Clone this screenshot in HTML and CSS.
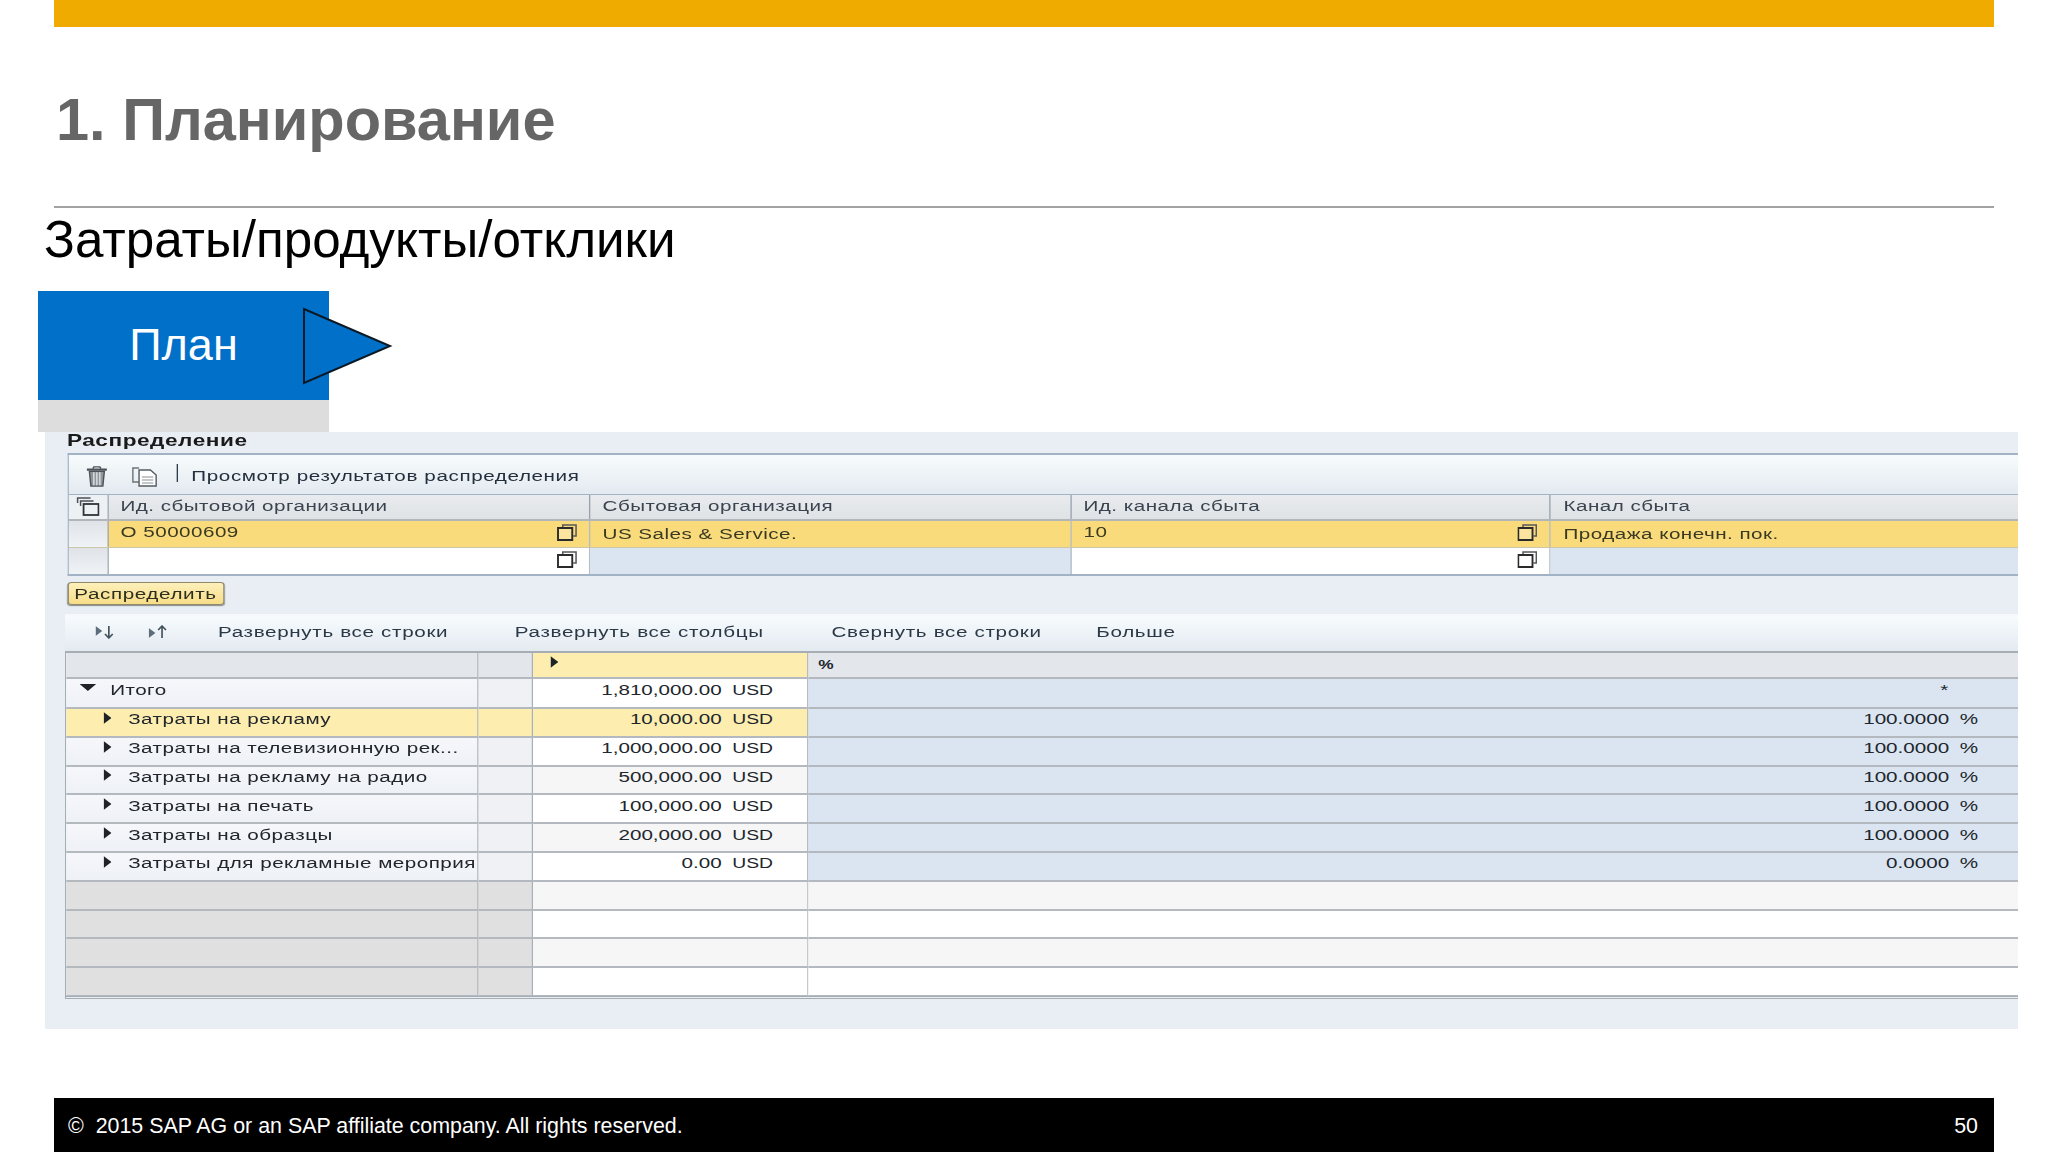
FILE: index.html
```html
<!DOCTYPE html>
<html lang="ru">
<head>
<meta charset="utf-8">
<title>1. Планирование</title>
<link rel="stylesheet" href="styles.css">
</head>
<body>
<svg class="defs" width="0" height="0" aria-hidden="true">
  <symbol id="vh" viewBox="0 0 21 17" preserveAspectRatio="none"><path d="M6 3.500V1h14v11h-3" fill="none" stroke="#55585c" stroke-width="1.600"/><rect x="1" y="4" width="15" height="12" fill="#fff" fill-opacity=".25" stroke="#2b2b2b" stroke-width="2"/></symbol>
  <symbol id="tr" viewBox="0 0 8 12" preserveAspectRatio="none"><path d="M0 0l8 6-8 6z" fill="#1f2327"/></symbol>
</svg>
<div class="slide">
  <header class="head">
    <div class="topbar"></div>
    <h1 class="title">1. Планирование</h1>
    <div class="rule"></div>
  </header>
  <h2 class="subtitle">Затраты/продукты/отклики</h2>
  <div class="plan">
    <div class="plan-box">План</div>
    <svg class="plan-arrow" viewBox="0 0 92 78" width="92" height="78"><path d="M2 2L88 39 2 76z" fill="#0070c9" stroke="#0b1a26" stroke-width="2"/></svg>
  </div>
  <section class="panel">
    <div class="panel-inner">
      <div class="panel-title">Распределение</div>
      <div class="t1">
        <div class="tb1">
          <svg class="ic-trash" viewBox="0 0 24 24" width="18" height="22" preserveAspectRatio="none"><path d="M2 5h20" stroke="#4c5257" stroke-width="2.400"/><path d="M8 4l1-2h6l1 2" fill="none" stroke="#4c5257" stroke-width="1.500"/><path d="M4.500 7h15l-1.500 16H6z" fill="#8e969c" stroke="#4c5257" stroke-width="1.400"/><path d="M9 8v14M12 8v14M15 8v14" stroke="#e9edf0" stroke-width="1.200"/></svg>
          <svg class="ic-copy" viewBox="0 0 28 22" width="20" height="22" preserveAspectRatio="none"><path d="M8 3H1.500v14H8" fill="none" stroke="#6d7479" stroke-width="1.500"/><path d="M8 5h12l6 5v11H8z" fill="#fff" stroke="#565c61" stroke-width="1.500"/><path d="M11 12h12M11 15h12M11 18h12" stroke="#8a9196" stroke-width="1.200"/></svg>
          <span class="sep"></span>
          <span class="tb1-text">Просмотр результатов распределения</span>
        </div>
        <div class="t1-row t1-head">
          <div class="c sel"><svg viewBox="0 0 24 20" width="18" height="20" preserveAspectRatio="none"><path d="M2 7V2h13M5 10V5h13" fill="none" stroke="#4a5055" stroke-width="1.500"/><rect x="8" y="8" width="15" height="11" fill="none" stroke="#2f3337" stroke-width="1.800"/></svg></div>
          <div class="c">Ид. сбытовой организации</div>
          <div class="c">Сбытовая организация</div>
          <div class="c">Ид. канала сбыта</div>
          <div class="c">Канал сбыта</div>
        </div>
        <div class="t1-row t1-hi">
          <div class="c sel"></div>
          <div class="c vh up">О 50000609<svg width="15" height="17"><use href="#vh"/></svg></div>
          <div class="c">US Sales &amp; Service.</div>
          <div class="c vh up">10<svg width="15" height="17"><use href="#vh"/></svg></div>
          <div class="c">Продажа конечн. пок.</div>
        </div>
        <div class="t1-row t1-empty">
          <div class="c sel"></div>
          <div class="c vh input"><span></span><svg width="15" height="17"><use href="#vh"/></svg></div>
          <div class="c desc"></div>
          <div class="c vh input"><span></span><svg width="15" height="17"><use href="#vh"/></svg></div>
          <div class="c desc"></div>
        </div>
      </div>
      <button class="btn" type="button">Распределить</button>
      <div class="tb2">
        <svg class="ic-a" viewBox="0 0 18 14" width="15" height="14" preserveAspectRatio="none"><path d="M0 1l6 5-6 5z" fill="#5d6d7a"/><path d="M12 1v11M8.500 9l3.500 4 3.500-4" fill="none" stroke="#44525d" stroke-width="1.500"/></svg>
        <svg class="ic-b" viewBox="0 0 18 14" width="15" height="14" preserveAspectRatio="none"><path d="M0 3l6 5-6 5z" fill="#5d6d7a"/><path d="M12 13V2M8.500 5L12 1l3.500 4" fill="none" stroke="#44525d" stroke-width="1.500"/></svg>
        <span class="tb2-a">Развернуть все строки</span>
        <span class="tb2-b">Развернуть все столбцы</span>
        <span class="tb2-c">Свернуть все строки</span>
        <span class="tb2-d">Больше</span>
      </div>
      <div class="t2">
        <div class="r r-head">
          <div class="lbl"></div><div class="nar"></div>
          <div class="val"><svg class="head-tr" width="6" height="12"><use href="#tr"/></svg></div>
          <div class="pct">%</div>
        </div>
        <div class="r r-total">
          <div class="lbl total"><svg width="12.500" height="7" viewBox="0 0 17 7" preserveAspectRatio="none"><path d="M0 0h17L8.500 7z" fill="#1f2327"/></svg>Итого</div><div class="nar"></div>
          <div class="val"><b>1,810,000.00</b><i>USD</i></div>
          <div class="pct num star">*</div>
        </div>
        <div class="r r-hi">
          <div class="lbl"><svg width="6" height="12"><use href="#tr"/></svg>Затраты на рекламу</div><div class="nar"></div>
          <div class="val"><b>10,000.00</b><i>USD</i></div>
          <div class="pct num"><b>100.0000</b><i>%</i></div>
        </div>
        <div class="r">
          <div class="lbl"><svg width="6" height="12"><use href="#tr"/></svg>Затраты на телевизионную рек...</div><div class="nar"></div>
          <div class="val"><b>1,000,000.00</b><i>USD</i></div>
          <div class="pct num"><b>100.0000</b><i>%</i></div>
        </div>
        <div class="r">
          <div class="lbl"><svg width="6" height="12"><use href="#tr"/></svg>Затраты на рекламу на радио</div><div class="nar"></div>
          <div class="val alt"><b>500,000.00</b><i>USD</i></div>
          <div class="pct num"><b>100.0000</b><i>%</i></div>
        </div>
        <div class="r">
          <div class="lbl"><svg width="6" height="12"><use href="#tr"/></svg>Затраты на печать</div><div class="nar"></div>
          <div class="val"><b>100,000.00</b><i>USD</i></div>
          <div class="pct num"><b>100.0000</b><i>%</i></div>
        </div>
        <div class="r">
          <div class="lbl"><svg width="6" height="12"><use href="#tr"/></svg>Затраты на образцы</div><div class="nar"></div>
          <div class="val alt"><b>200,000.00</b><i>USD</i></div>
          <div class="pct num"><b>100.0000</b><i>%</i></div>
        </div>
        <div class="r">
          <div class="lbl"><svg width="6" height="12"><use href="#tr"/></svg>Затраты для рекламные мероприя</div><div class="nar"></div>
          <div class="val"><b>0.00</b><i>USD</i></div>
          <div class="pct num"><b>0.0000</b><i>%</i></div>
        </div>
        <div class="r r-blank alt-row"><div class="lbl"></div><div class="nar"></div><div class="val"></div><div class="pct"></div></div>
        <div class="r r-blank"><div class="lbl"></div><div class="nar"></div><div class="val"></div><div class="pct"></div></div>
        <div class="r r-blank alt-row"><div class="lbl"></div><div class="nar"></div><div class="val"></div><div class="pct"></div></div>
        <div class="r r-blank"><div class="lbl"></div><div class="nar"></div><div class="val"></div><div class="pct"></div></div>
      </div>
    </div>
  </section>
  <footer class="foot">
    <span>©&nbsp; 2015 SAP AG or an SAP affiliate company. All rights reserved.</span>
    <span>50</span>
  </footer>
</div>
</body>
</html>
```
FILE: styles.css
```css
* { box-sizing: border-box; }
html, body { margin: 0; padding: 0; background: #fff; }
body { font-family: "Liberation Sans", Arial, sans-serif; }
.defs { position: absolute; }
.slide { width: 2048px; height: 1152px; display: flex; flex-direction: column; overflow: hidden; }

.head { margin: 0 54px; }
.topbar { height: 27px; background: #f0ab00; }
.title { margin: 0; height: 179px; padding: 61px 0 0 2px; font-size: 59.500px; line-height: 64px; font-weight: 700; color: #666; }
.rule { height: 2px; background: #a3a3a3; }

.subtitle { margin: 0 0 0 44px; height: 83px; padding-top: 2px; font-size: 51.200px; line-height: 60px; font-weight: 400; color: #000; }

.plan { position: relative; margin-left: 38px; width: 291px; height: 141px; background: #ddd; }
.plan-box { height: 109px; background: #0070c9; color: #fff; font-size: 45px; line-height: 107px; text-align: center; }
.plan-arrow { position: absolute; left: 264px; top: 16px; }

/* the ERP screenshot is stretched sideways in the slide: lay it out narrow and scale it */
.panel { margin-left: 45px; width: 1973px; height: 597px; flex: none; background: #e9eef5; overflow: hidden; }
.panel-inner { width: 1483.500px; height: 597px; padding-left: 15px; transform: scaleX(1.33); transform-origin: 0 0; color: #20262c; font-size: 15.500px; letter-spacing: .46px; filter: blur(.35px); }
.panel-title { height: 21px; padding-left: 1.500px; font-size: 17px; line-height: 18px; font-weight: 700; letter-spacing: .4px; color: #1a1a1a; }

.t1 { margin-left: 1.500px; border: 2px solid #a3b3c6; border-width: 2px 0 2px 1.500px; background: #fff; }
.tb1 { height: 39px; display: flex; align-items: center; background: linear-gradient(#f7fbfc, #e3eaf0); }
.ic-trash { margin: 3px 0 0 12px; }
.ic-copy { margin: 2px 0 0 17px; }
.sep { width: 1.500px; height: 18px; margin: -3px 0 0 14px; background: #2d3a48; }
.tb1-text { margin-left: 10px; padding-top: 2px; color: #24303e; }

.t1-row { display: grid; grid-template-columns: 30px 362.400px 361.700px 360.900px 1fr; letter-spacing: .36px; }
.t1-row .c { display: flex; align-items: center; padding-left: 9.300px; border-right: 1.500px solid #b4bdc6; white-space: nowrap; }
.t1-row .c:last-child { border-right: 0; }
.t1-head { height: 27px; background: linear-gradient(#e9ebee, #dfe3e6); border-top: 1px solid #a3b3c6; border-bottom: 2px solid #b1b6bb; color: #3a4450; }
.t1-head .c { border-right-color: #99a3ae; padding-bottom: 2px; }
.t1-row .sel { border-right: 1px solid #9fa9b4; background: linear-gradient(#dfe3e8, #f0f3f6); }
.t1-row.t1-head .sel { padding-left: 5.500px; background: #eef1f4; }
.t1-hi { height: 26.500px; background: #fadb7c; border-bottom: 1px solid #cdc7a8; color: #3a3a22; }
.t1-empty { height: 26.500px; background: #fff; }
.vh { justify-content: space-between; padding-right: 9px; }
.up { padding-bottom: 3px; }
.input svg { margin-top: -3px; }
.desc { background: #dbe5f1; }

.btn { display: block; width: 118px; height: 23px; margin: 6px 0 0 1.500px; padding: 0; border: 1px solid #8f8a6c; border-radius: 3px; background: linear-gradient(#fdf0bb, #f7dd87); box-shadow: 0 1px 1px #888; font: inherit; letter-spacing: .46px; color: #2e2e1e; text-align: center; }

.tb2 { display: flex; align-items: center; height: 37px; margin-top: 9px; border-top: 2px solid #f6f8fb; padding: 0 0 4px 23px; background: linear-gradient(#f7fbfe, #e3eaf0); color: #2b3846; letter-spacing: .5px; }
.tb2 span { white-space: nowrap; }
.ic-b { margin-left: 25px; }
.tb2-a { margin-left: 37px; }
.tb2-b { margin-left: 50px; }
.tb2-c { margin-left: 51px; }
.tb2-d { margin-left: 41px; }

.t2 { border: 2px solid #a6adb5; border-width: 2px 0 3px 1.500px; border-bottom-style: double; height: 348px; overflow: hidden; }
.r { display: grid; grid-template-columns: 309.700px 41.400px 206.800px 1fr; height: 28.800px; white-space: nowrap; }
.r > div { border-bottom: 2px solid #b3b9bf; padding-bottom: 6px; }
.lbl { display: flex; align-items: center; padding-left: 28px; border-right: 1.500px solid #b0b6bd; background: linear-gradient(#f6f7fb, #eef1f6); overflow: hidden; letter-spacing: .36px; }
.lbl svg { margin: -3px 12.500px 0 0; flex: none; }
.lbl.total { padding-left: 10px; }
.lbl.total svg { margin: -6px 10.500px 0 0; }
.nar { border-right: 1.500px solid #a8afb6; background: #eff1f4; }
.val { display: flex; align-items: center; justify-content: flex-end; padding-right: 25.500px; border-right: 1.500px solid #b0b6bd; background: #fff; }
.val.alt { background: #f6f6f6; }
b { font-weight: 400; letter-spacing: 0; }
i { font-style: normal; margin-left: 8px; letter-spacing: 0; }
.val i { font-size: 14.500px; }
.pct { display: flex; align-items: center; padding-left: 7.500px; background: #dbe5f1; }
.pct.num { justify-content: flex-end; padding-right: 30px; }
.pct.star { padding-right: 52px; }
.r-head { height: 26px; }
.r-head .lbl, .r-head .nar { background: #e3e6eb; }
.r-head .val { justify-content: flex-start; padding-left: 12.700px; background: #fdeeb0; }
.head-tr { margin-top: 0; }
.r-head .pct { background: #e3e6eb; padding-bottom: 2px; font-weight: 700; font-size: 13px; }
.r-total { height: 30px; }
.r-hi .lbl, .r-hi .nar, .r-hi .val { background: #fdeeb0; }
.r-blank .lbl, .r-blank .nar { background: #e0e0e0; }
.r-blank .val, .r-blank .pct { background: #fff; }
.alt-row .val, .alt-row .pct { background: #f7f6f6; }
.r-blank .val { border-right-color: #c2c5c9; }

.foot { margin: 69px 54px 0; height: 54px; flex: none; background: #000; color: #fff; font-size: 21.400px; display: flex; align-items: center; justify-content: space-between; padding: 2px 16px 0 14px; }
```
